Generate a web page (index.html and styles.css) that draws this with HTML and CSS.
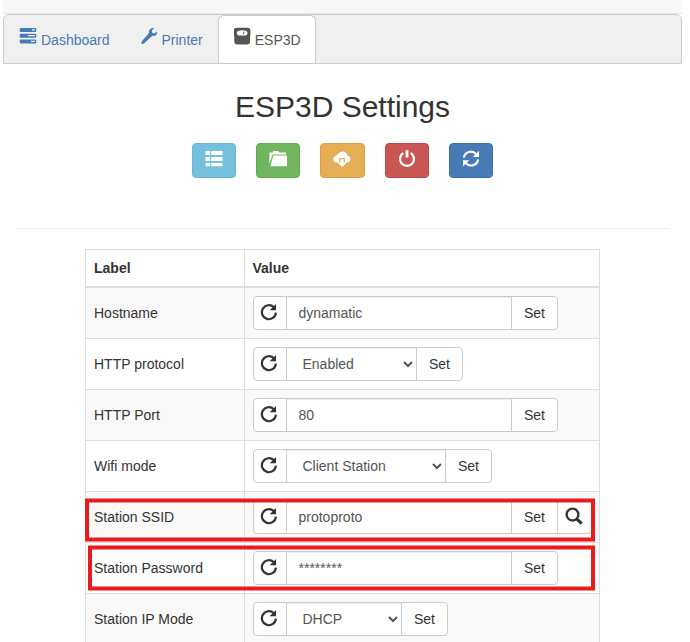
FILE: index.html
```html
<!DOCTYPE html>
<html lang="en">
<head>
<meta charset="utf-8">
<title>ESP3D Settings</title>
<link rel="stylesheet" href="styles.css">
</head>
<body>
<svg class="defs" aria-hidden="true">
  <symbol id="reload" viewBox="0 0 18 18"><path d="M13.8 4.2A7 7 0 1 0 15.9 9.6" fill="none" stroke="currentColor" stroke-width="2.2"/><path d="M16 .9v6.300H9.700z" fill="currentColor"/></symbol>
</svg>
<div class="page">
  <header class="navbar"></header>
  <nav class="tabs">
    <a class="tab"><svg class="icon" viewBox="0 0 18 18" fill="currentColor"><path fill-rule="evenodd" d="M1.5 1h15l.8.8v2.4l-.8.8h-15l-.8-.8V1.800zM13 2.300v1.300h3V2.300zM1.500 6.700h15l.8.8v2.400l-.8.8h-15l-.8-.8V7.500zM9 8v1.300h7V8zM1.500 12.400h15l.8.8v2.400l-.8.8h-15l-.8-.8v-2.400zM12 13.700V15h4v-1.300z"/></svg>Dashboard</a>
    <a class="tab"><svg class="icon" viewBox="0 0 18 18" fill="currentColor"><path d="M13.900 1.200 11.700 3.700l.6 2.200 2.200.6 2.500-2.100c.6 2.800-1.700 5-4.600 4.400L4 16.500c-1.500 1.300-3.500-.4-2.300-2.100L9 6C8.400 3.100 10.900.3 13.900 1.200z"/></svg>Printer</a>
    <a class="tab active"><svg class="icon" viewBox="0 0 18 18" fill="currentColor"><path fill-rule="evenodd" d="M3.500.8h11.300q2.600 0 2.600 2.600v4q0 1-.4 2v5q0 3-3 3H4.300q-3 0-3-3v-5q-.4-1-.4-2v-4Q.9.800 3.500.8zM9.200 3.200C6 3.200 3.800 4.100 3.800 5.800c0 1.400.9 2.200 1.800 2.700h7.200c.9-.5 1.800-1.300 1.800-2.700C14.600 4.100 12.400 3.200 9.200 3.200z"/><path d="m9.500 7.500 1.200-2.900h1L10.600 7.500z"/></svg>ESP3D</a>
  </nav>
  <main>
    <h2>ESP3D Settings</h2>
    <div class="actions">
      <button class="btn info"><svg class="icon" viewBox="0 0 18 18" fill="currentColor"><path d="M.5 1h4.600v4H.5zM6.200 1h11.300v4H6.200zM.5 7h4.600v4H.5zM6.200 7h11.300v4H6.200zM.5 13h4.600v3.200H.5zM6.200 13h11.300v3.200H6.200z"/></svg></button>
      <button class="btn success"><svg class="icon" viewBox="0 0 18 18" fill="currentColor"><path d="M.4 13.500V2.500h3l1-1.400h4.800l1 1.400h6.900v1.900H3.600zM4.400 5.600H18v10.600H1.200z"/></svg></button>
      <button class="btn warning"><svg class="icon" viewBox="0 0 18 18" fill="currentColor"><path d="M3.300 12.500a3.300 3.300 0 0 1-.5-6.500A2.300 2.300 0 0 1 5.200 4.300 4.800 4.800 0 0 1 14.300 5.400a3.600 3.600 0 0 1 .2 7.100z"/><path class="cut" d="M6 8h6v5.500H6z"/><path d="M7.200 9.200h3.600v3.300h2.900L9 17.100l-4.700-4.600h2.900z"/></svg></button>
      <button class="btn danger"><svg class="icon" viewBox="0 0 18 18" fill="none" stroke="currentColor"><path d="M5.300 2.900a7 7 0 1 0 7.400 0" stroke-width="2.300"/><path d="M9 .2V7.500" stroke-width="2.800"/></svg></button>
      <button class="btn primary"><svg class="icon" viewBox="0 0 18 18"><path d="M1.900 7.700A7 7 0 0 1 14 4M16.100 9.500A7 7 0 0 1 4 13.200" fill="none" stroke="currentColor" stroke-width="2.100"/><path d="M17 .8v6.200h-6.200zM1 16.500v-6.200h6.200z" fill="currentColor"/></svg></button>
    </div>
    <hr>
    <table>
      <thead><tr><th class="label">Label</th><th>Value</th></tr></thead>
      <tbody>
        <tr><td>Hostname</td><td><div class="group"><button class="ic"><svg class="icon"><use href="#reload"/></svg></button><input value="dynamatic"><button class="set">Set</button></div></td></tr>
        <tr><td>HTTP protocol</td><td><div class="group"><button class="ic"><svg class="icon"><use href="#reload"/></svg></button><select class="protocol"><option>Enabled</option></select><button class="set">Set</button></div></td></tr>
        <tr><td>HTTP Port</td><td><div class="group"><button class="ic"><svg class="icon"><use href="#reload"/></svg></button><input value="80"><button class="set">Set</button></div></td></tr>
        <tr><td>Wifi mode</td><td><div class="group"><button class="ic"><svg class="icon"><use href="#reload"/></svg></button><select class="wifi"><option>Client Station</option></select><button class="set">Set</button></div></td></tr>
        <tr><td>Station SSID</td><td><div class="group"><button class="ic"><svg class="icon"><use href="#reload"/></svg></button><input value="protoproto"><button class="set">Set</button><button class="ic search"><svg class="icon" viewBox="0 0 18 18" fill="none" stroke="currentColor"><circle cx="7.500" cy="7.600" r="5.900" stroke-width="2.300"/><path d="m11.700 11.800 5 4.800" stroke-width="3"/></svg></button></div></td></tr>
        <tr><td>Station Password</td><td><div class="group"><button class="ic"><svg class="icon"><use href="#reload"/></svg></button><input value="********"><button class="set">Set</button></div></td></tr>
        <tr><td>Station IP Mode</td><td><div class="group"><button class="ic"><svg class="icon"><use href="#reload"/></svg></button><select class="ip"><option>DHCP</option></select><button class="set">Set</button></div></td></tr>
      </tbody>
    </table>
  </main>
</div>
<svg class="highlights" viewBox="0 0 690 642" fill="none" stroke="#e81c1c" stroke-width="4">
  <rect x="87" y="500.500" width="506" height="39"/>
  <rect x="90" y="547.500" width="503" height="41"/>
</svg>
</body>
</html>
```
FILE: styles.css
```css
* { box-sizing: border-box; }
html, body { height: 100%; }
body {
  margin: 0;
  overflow: hidden;
  position: relative;
  background: #fff;
  color: #333;
  font: 14px/20px "Liberation Sans", Arial, sans-serif;
}
.defs { display: none; }
.page { width: 679px; margin-left: 3px; }
.icon { display: block; width: 18px; height: 18px; flex: none; }
.navbar { height: 14px; background: #f8f8f8; border-bottom: 1px solid #e7e7e7; }
.tabs {
  display: flex;
  height: 50px;
  background: #f0f0f0;
  border: 1px solid #ccc;
  border-radius: 6px 6px 0 0;
}
.tab {
  display: flex;
  gap: 4px;
  height: 49px;
  padding: 14px 15px 0;
  line-height: 21px;
  border: 1px solid transparent;
  border-bottom: 0;
  color: #467bb7;
}
.tab .icon { margin: -3px 0 0 -1px; }
.tab:nth-child(2) { margin-left: -1px; }
.tab.active {
  margin-left: -1px;
  width: 98px;
  height: 48px;
  color: #555;
  background: #fff;
  border-color: #ccc;
  border-radius: 6px 6px 0 0;
}
h2 { margin: 26px 0 0; font-size: 30px; line-height: 33px; font-weight: 400; text-align: center; }
.actions { display: flex; justify-content: center; gap: 20px; margin-top: 20px; }
.btn {
  width: 44.3px;
  height: 35px;
  padding: 0 0 3px;
  display: flex;
  align-items: center;
  justify-content: center;
  color: #fff;
  border: 1px solid;
  border-radius: 4px;
}
.info { background: #75c0dd; border-color: #65b7d5; }
.success { background: #6fb65f; border-color: #62aa53; }
.warning { background: #e6ad57; border-color: #df9f43; }
.warning .cut { fill: #e6ad57; }
.danger { background: #ca5653; border-color: #bf4845; }
.primary { background: #487ab5; border-color: #3f6fa8; }
hr { margin: 50px 12px 20px; border: 0; border-top: 1px solid #eee; }
table {
  width: 515px;
  margin-left: 82px;
  border-collapse: separate;
  border-spacing: 0;
  table-layout: fixed;
  border: 1px solid #ddd;
}
th, td { padding: 8px; text-align: left; vertical-align: middle; border-bottom: 1px solid #ddd; }
th { height: 38px; border-bottom-width: 2px; }
td { height: 51px; padding-top: 8px; padding-bottom: 8px; }
.label { width: 159px; }
th:first-child, td:first-child { border-right: 1px solid #ddd; }
th:nth-child(2) { padding-left: 7.500px; }
tbody tr:nth-child(odd) { background: #f9f9f9; }
.group { display: flex; height: 34px; }
.group > * {
  flex: none;
  height: 34px;
  margin: 0 0 0 -1px;
  border: 1px solid #ccc;
  border-radius: 0;
  background: #fff;
  color: #333;
  font: inherit;
}
.group > :first-child { margin-left: 0; border-radius: 4px 0 0 4px; }
.group > :last-child { border-radius: 0 4px 4px 0; }
.group .ic { width: 34px; padding: 0 0 2px 6px; }
.group .search { width: 35px; padding-left: 7px; }
.group .set { width: 47px; padding: 0; }
.group input, .group select {
  color: #555;
  padding: 6px 12px 6px 11.500px;
  box-shadow: inset 0 1px 1px rgba(0, 0, 0, .075);
}
.group input { width: 226px; }
.group .protocol { width: 131px; }
.group .wifi { width: 160px; }
.group .ip { width: 116px; }
.highlights { position: absolute; inset: 0; width: 690px; height: 642px; pointer-events: none; }
```
